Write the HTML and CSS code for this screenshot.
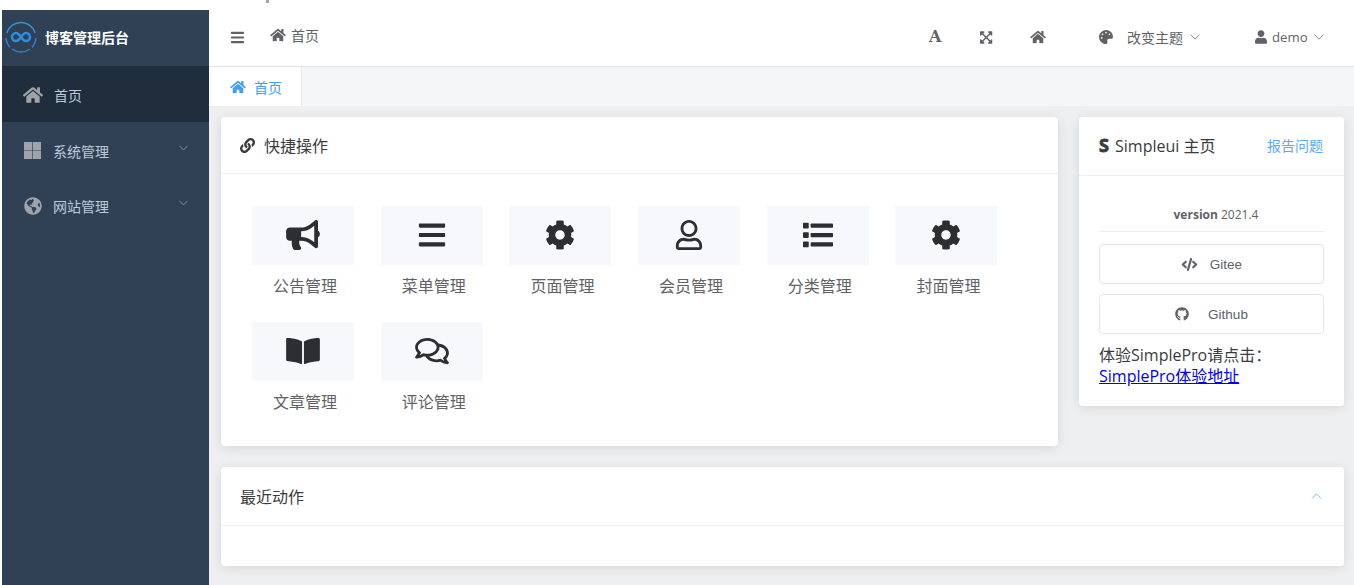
FILE: index.html
```html
<!DOCTYPE html>
<html lang="zh-CN">
<head>
<meta charset="utf-8">
<title>博客管理后台</title>
<link rel="stylesheet" href="styles.css">
</head>
<body>
<svg class="sprite" aria-hidden="true">
  <symbol id="home" viewBox="0 0 576 512"><path d="M280.37 148.26L96 300.11V464a16 16 0 0 0 16 16l112.06-.29a16 16 0 0 0 15.92-16V368a16 16 0 0 1 16-16h64a16 16 0 0 1 16 16v95.64a16 16 0 0 0 16 16.05L464 480a16 16 0 0 0 16-16V300L295.67 148.26a12.19 12.19 0 0 0-15.3 0zM571.6 251.47L488 182.56V44.05a12 12 0 0 0-12-12h-56a12 12 0 0 0-12 12v72.61L318.47 43a48 48 0 0 0-61 0L4.34 251.47a12 12 0 0 0-1.6 16.9l25.5 31A12 12 0 0 0 45.15 301l235.22-193.74a12.19 12.19 0 0 1 15.3 0L530.9 301a12 12 0 0 0 16.9-1.6l25.5-31a12 12 0 0 0-1.7-16.93z"/></symbol>
  <symbol id="bars" viewBox="0 0 448 512"><path d="M16 132h416c8.837 0 16-7.163 16-16V76c0-8.837-7.163-16-16-16H16C7.163 60 0 67.163 0 76v40c0 8.837 7.163 16 16 16zm0 160h416c8.837 0 16-7.163 16-16v-40c0-8.837-7.163-16-16-16H16c-8.837 0-16 7.163-16 16v40c0 8.837 7.163 16 16 16zm0 160h416c8.837 0 16-7.163 16-16v-40c0-8.837-7.163-16-16-16H16c-8.837 0-16 7.163-16 16v40c0 8.837 7.163 16 16 16z"/></symbol>
  <symbol id="cog" viewBox="0 0 512 512"><path d="M487.4 315.7l-42.6-24.6c4.3-23.2 4.3-47 0-70.2l42.6-24.6c4.9-2.8 7.1-8.6 5.5-14-11.1-35.6-30-67.8-54.7-94.6-3.8-4.1-10-5.1-14.8-2.3L380.8 110c-17.9-15.4-38.5-27.3-60.8-35.1V25.8c0-5.6-3.9-10.5-9.4-11.7-36.7-8.2-74.3-7.8-109.2 0-5.5 1.2-9.4 6.1-9.4 11.7V75c-22.2 7.9-42.8 19.8-60.8 35.1L88.7 85.5c-4.9-2.8-11-1.9-14.8 2.3-24.7 26.7-43.6 58.9-54.7 94.6-1.7 5.4.6 11.2 5.5 14L67.3 221c-4.3 23.2-4.3 47 0 70.2l-42.6 24.6c-4.9 2.8-7.1 8.6-5.5 14 11.1 35.6 30 67.8 54.7 94.6 3.8 4.1 10 5.1 14.8 2.3l42.6-24.6c17.9 15.4 38.5 27.3 60.8 35.1v49.2c0 5.6 3.9 10.5 9.4 11.7 36.7 8.2 74.3 7.8 109.2 0 5.5-1.2 9.4-6.1 9.4-11.7v-49.2c22.2-7.9 42.8-19.8 60.8-35.1l42.6 24.6c4.9 2.8 11 1.9 14.8-2.3 24.7-26.7 43.6-58.9 54.7-94.6 1.5-5.5-.7-11.3-5.6-14.1zM256 336c-44.1 0-80-35.9-80-80s35.9-80 80-80 80 35.9 80 80-35.9 80-80 80z"/></symbol>
  <symbol id="bullhorn" viewBox="0 0 576 512"><path d="M576 240c0-23.63-12.95-44.04-32-55.12V32.01C544 23.26 537.02 0 512 0c-7.12 0-14.19 2.38-19.98 7.02l-85.03 68.03C364.28 109.19 310.66 128 256 128H64c-35.35 0-64 28.65-64 64v96c0 35.35 28.65 64 64 64h33.7c-1.39 10.48-2.18 21.14-2.18 32 0 39.77 9.26 77.35 25.56 110.94 5.19 10.69 16.52 17.06 28.4 17.06h74.28c26.05 0 41.69-29.84 25.9-50.56-16.4-21.52-26.15-48.36-26.15-77.44 0-11.11 1.62-21.79 4.41-32H256c54.66 0 108.28 18.81 150.98 52.95l85.03 68.03a32.023 32.023 0 0 0 19.98 7.02c24.92 0 32-22.78 32-32V295.13C563.05 284.04 576 263.63 576 240zm-96 141.42l-33.05-26.44C392.95 311.78 325.12 288 256 288v-96c69.12 0 136.95-23.78 190.95-66.98L480 98.58v282.84z"/></symbol>
  <symbol id="user" viewBox="0 0 448 512"><path d="M224 256c70.7 0 128-57.3 128-128S294.7 0 224 0 96 57.3 96 128s57.3 128 128 128zm89.6 32h-16.7c-22.2 10.2-46.9 16-72.9 16s-50.6-5.8-72.9-16h-16.7C60.2 288 0 348.2 0 422.4V464c0 26.5 21.5 48 48 48h352c26.5 0 48-21.5 48-48v-41.6c0-74.2-60.2-134.4-134.4-134.4z"/></symbol>
  <symbol id="user-o" viewBox="0 0 448 512"><path d="M313.6 304c-28.7 0-42.5 16-89.6 16-47.1 0-60.8-16-89.6-16C60.2 304 0 364.2 0 438.4V464c0 26.5 21.5 48 48 48h352c26.5 0 48-21.5 48-48v-25.6c0-74.2-60.2-134.4-134.4-134.4zM400 464H48v-25.6c0-47.6 38.8-86.4 86.4-86.4 14.6 0 38.3 16 89.6 16 51.7 0 74.9-16 89.6-16 47.6 0 86.4 38.8 86.4 86.4V464zM224 288c79.5 0 144-64.5 144-144S303.5 0 224 0 80 64.5 80 144s64.5 144 144 144zm0-240c52.9 0 96 43.1 96 96s-43.1 96-96 96-96-43.1-96-96 43.1-96 96-96z"/></symbol>
  <symbol id="list" viewBox="0 0 512 512"><rect x="0" y="48" width="98" height="98" rx="14"/><rect x="0" y="208" width="98" height="98" rx="14"/><rect x="0" y="368" width="98" height="98" rx="14"/><rect x="130" y="60" width="382" height="74" rx="14"/><rect x="130" y="220" width="382" height="74" rx="14"/><rect x="130" y="380" width="382" height="74" rx="14"/></symbol>
  <symbol id="expand" viewBox="0 0 448 512"><path d="M448 344v112a23.94 23.94 0 0 1-24 24H312c-21.39 0-32.09-25.9-17-41l36.2-36.2L224 295.6 116.77 402.9 153 439c15.09 15.1 4.39 41-17 41H24a23.94 23.94 0 0 1-24-24V344c0-21.4 25.89-32.1 41-17l36.19 36.2L184.46 256 77.18 148.7 41 185c-15.1 15.1-41 4.4-41-17V56a23.94 23.94 0 0 1 24-24h112c21.39 0 32.09 25.9 17 41l-36.2 36.2L224 216.4l107.23-107.3L295 73c-15.09-15.1-4.39-41 17-41h112a23.94 23.94 0 0 1 24 24v112c0 21.4-25.89 32.1-41 17l-36.19-36.2L263.54 256l107.28 107.3L407 327.1c15.1-15.2 41-4.5 41 16.9z"/></symbol>
  <symbol id="palette" viewBox="0 0 512 512"><path d="M204.3 5C104.9 24.4 24.8 104.3 5.2 203.4c-37 187 131.7 326.4 258.8 306.7 41.2-6.4 61.4-54.6 42.5-91.7-23.1-45.4 9.9-98.4 60.9-98.4h79.7c35.8 0 64.8-29.6 64.9-65.3C511.5 97.1 368.1-26.9 204.3 5zM96 320c-17.7 0-32-14.3-32-32s14.3-32 32-32 32 14.3 32 32-14.3 32-32 32zm32-128c-17.7 0-32-14.3-32-32s14.3-32 32-32 32 14.3 32 32-14.3 32-32 32zm128-64c-17.7 0-32-14.3-32-32s14.3-32 32-32 32 14.3 32 32-14.3 32-32 32zm128 64c-17.7 0-32-14.3-32-32s14.3-32 32-32 32 14.3 32 32-14.3 32-32 32z"/></symbol>
  <symbol id="link" viewBox="0 0 512 512"><path d="M326.612 185.391c59.747 59.809 58.927 155.698.36 214.59-.11.12-.24.25-.36.37l-67.2 67.2c-59.27 59.27-155.699 59.262-214.96 0-59.27-59.26-59.27-155.7 0-214.96l37.106-37.106c9.84-9.84 26.786-3.3 27.294 10.606.648 17.722 3.826 35.527 9.69 52.721 1.986 5.822.567 12.262-3.783 16.612l-13.087 13.087c-28.026 28.026-28.905 73.66-1.155 101.96 28.024 28.579 74.086 28.749 102.325.51l67.2-67.19c28.191-28.191 28.073-73.757 0-101.83-3.701-3.694-7.429-6.564-10.341-8.569a16.037 16.037 0 0 1-6.947-12.606c-.396-10.567 3.348-21.456 11.698-29.806l21.054-21.055c5.521-5.521 14.182-6.199 20.584-1.731a152.482 152.482 0 0 1 20.522 17.197zM467.547 44.449c-59.261-59.262-155.69-59.27-214.96 0l-67.2 67.2c-.12.12-.25.25-.36.37-58.566 58.892-59.387 154.781.36 214.59a152.454 152.454 0 0 0 20.521 17.196c6.402 4.468 15.064 3.789 20.584-1.731l21.054-21.055c8.35-8.35 12.094-19.239 11.698-29.806a16.037 16.037 0 0 0-6.947-12.606c-2.912-2.005-6.64-4.875-10.341-8.569-28.073-28.073-28.191-73.639 0-101.83l67.2-67.19c28.239-28.239 74.3-28.069 102.325.51 27.75 28.3 26.872 73.934-1.155 101.96l-13.087 13.087c-4.35 4.35-5.769 10.79-3.783 16.612 5.864 17.194 9.042 34.999 9.69 52.721.509 13.906 17.454 20.446 27.294 10.606l37.106-37.106c59.271-59.259 59.271-155.699.001-214.959z"/></symbol>
  <symbol id="comments" viewBox="0 0 576 512"><path d="M532 386.2c27.5-27.1 44-61.1 44-98.2 0-80-76.5-146.1-176.2-157.9C368.3 72.5 294.3 32 208 32 93.1 32 0 103.6 0 192c0 37 16.5 71 44 98.2-15.3 30.7-37.3 54.5-37.7 54.9-6.3 6.7-8.1 16.5-4.4 25 3.6 8.5 12 14 21.2 14 53.5 0 96.7-20.2 125.2-38.8 9.2 2.1 18.7 3.7 28.4 4.9C208.1 407.6 281.8 448 368 448c20.8 0 40.8-2.4 59.8-6.8C456.3 459.7 499.4 480 553 480c9.2 0 17.5-5.5 21.2-14 3.6-8.5 1.9-18.3-4.4-25-.4-.3-22.5-24.1-37.8-54.8zm-392.8-92.3L122.1 305c-14.1 9.1-28.5 16.3-43.1 21.4 2.7-4.7 5.4-9.7 8-14.8l15.5-31.1L77.7 256C64.2 242.6 48 220.7 48 192c0-60.7 73.3-112 160-112s160 51.3 160 112-73.3 112-160 112c-16.5 0-33-1.9-49-5.6l-19.8-4.5zM498.3 352l-24.7 24.4 15.5 31.1c2.6 5.1 5.3 10.1 8 14.8-14.6-5.1-29-12.3-43.1-21.4l-17.1-11.1-19.9 4.6c-16 3.7-32.5 5.6-49 5.6-54 0-102.2-20.1-131.3-49.7C338 339.5 416 272.9 416 192c0-3.4-.4-6.7-.7-10C479.7 196.5 528 238.8 528 288c0 28.7-16.2 50.6-29.7 64z"/></symbol>
  <symbol id="book" viewBox="0 0 576 512"><path d="M542.22 32.05c-54.8 3.11-163.72 14.43-230.96 55.59-4.64 2.84-7.27 7.89-7.27 13.17v363.87c0 11.55 12.63 18.85 23.28 13.49 69.18-34.82 169.23-44.32 218.7-46.92 16.89-.89 30.02-14.43 30.02-30.66V62.75c.01-17.71-15.35-31.74-33.77-30.7zM264.73 87.64C197.5 46.48 88.58 35.17 33.78 32.05 15.36 31.01 0 45.04 0 62.75V400.6c0 16.24 13.13 29.78 30.02 30.66 49.49 2.6 149.59 12.11 218.77 46.95 10.62 5.35 23.21-1.94 23.21-13.46V100.63c0-5.29-2.62-10.14-7.27-12.99z"/></symbol>
  <symbol id="globe" viewBox="0 0 496 512"><path d="M248 8C111.03 8 0 119.03 0 256s111.03 248 248 248 248-111.03 248-248S384.97 8 248 8zm82.29 357.6c-3.9 3.88-7.99 7.95-11.31 11.28-2.99 3-5.1 6.7-6.17 10.71-1.51 5.66-2.73 11.38-4.77 16.87l-17.39 46.85c-13.76 3-28 4.69-42.65 4.69v-27.38c1.69-12.62-7.64-36.26-22.63-51.25-6-6-9.37-14.14-9.37-22.63v-32.01c0-11.64-6.27-22.34-16.46-27.97-14.37-7.95-34.81-19.06-48.81-26.11-11.48-5.78-22.1-13.14-31.65-21.75l-.8-.72a114.792 114.792 0 0 1-18.06-20.74c-9.38-13.77-24.66-36.42-34.59-51.14 20.47-45.5 57.36-82.04 103.2-101.89l24.01 12.01C203.48 89.74 216 82.01 216 70.11v-11.3c7.99-1.29 16.12-2.11 24.39-2.42l28.3 28.3c6.25 6.25 6.25 16.38 0 22.63L264 112l-10.34 10.34c-3.12 3.12-3.12 8.19 0 11.31l4.69 4.69c3.12 3.12 3.12 8.19 0 11.31l-8 8a8.008 8.008 0 0 1-5.66 2.34h-8.99c-2.08 0-4.08.81-5.58 2.27l-9.92 9.65a8.001 8.001 0 0 0-1.58 9.31l15.59 31.19c2.66 5.32-1.21 11.58-7.15 11.58h-5.64c-1.93 0-3.79-.7-5.24-1.96l-9.28-8.06a16.017 16.017 0 0 0-15.55-3.1l-31.17 10.39a11.95 11.95 0 0 0-8.17 11.34c0 4.53 2.56 8.66 6.61 10.69l11.08 5.54c9.41 4.71 19.79 7.16 30.31 7.16s22.59 27.29 32 32h66.75c8.49 0 16.62 3.37 22.63 9.37l13.69 13.69a30.503 30.503 0 0 1 8.93 21.57 46.536 46.536 0 0 1-13.72 32.98zM417 274.25c-5.79-1.45-10.84-5-14.15-9.97l-17.98-26.97a23.97 23.97 0 0 1 0-26.62l19.59-29.38c2.32-3.47 5.5-6.29 9.24-8.15l12.98-6.49C440.2 193.59 448 223.87 448 256c0 8.67-.74 17.16-1.82 25.54L417 274.25z"/></symbol>
  <symbol id="github" viewBox="0 0 496 512"><path d="M244.8 8C106.1 8 0 113.3 0 252c0 110.9 69.8 205.8 169.5 239.2 12.8 2.3 17.3-5.6 17.3-12.1 0-6.2-.3-40.4-.3-61.4 0 0-70 15-84.7-29.8 0 0-11.4-29.1-27.8-36.6 0 0-22.9-15.7 1.6-15.4 0 0 24.9 2 38.6 25.8 21.9 38.6 58.6 27.5 72.9 20.9 2.3-16 8.8-27.1 16-33.7-55.9-6.2-112.3-14.3-112.3-110.5 0-27.5 7.6-41.3 23.6-58.9-2.6-6.5-11.1-33.3 2.6-67.9 20.9-6.5 69 27 69 27 20-5.6 41.5-8.5 62.8-8.5s42.8 2.9 62.8 8.5c0 0 48.1-33.6 69-27 13.7 34.7 5.2 61.4 2.6 67.9 16 17.7 25.8 31.5 25.8 58.9 0 96.5-58.9 104.2-114.8 110.5 9.2 7.9 17 22.9 17 46.4 0 33.7-.3 75.4-.3 83.6 0 6.5 4.6 14.4 17.3 12.1C428.2 457.8 496 362.9 496 252 496 113.3 383.5 8 244.8 8z"/></symbol>
  <symbol id="code" viewBox="0 0 18 14"><path d="M5 4 1.800 7 5 10M13 4 16.200 7 13 10M10.600 1.200 7.400 12.800" fill="none" stroke="currentColor" stroke-width="2.300" stroke-linecap="round" stroke-linejoin="round"/></symbol>
  <symbol id="windows" viewBox="0 0 16 16"><path d="M0 0h7.700v7.700H0zM8.300 0H16v7.700H8.300zM0 8.300h7.700V16H0zM8.300 8.300H16V16H8.300z"/></symbol>
  <symbol id="down" viewBox="0 0 10 6"><path d="M.6.6 5 5.200 9.400.6" fill="none" stroke="currentColor"/></symbol>
  <symbol id="up" viewBox="0 0 10 6"><path d="M.6 5.400 5 .8 9.400 5.400" fill="none" stroke="currentColor"/></symbol>
</svg>

<div class="caret-mark"></div>
<div class="app">
  <aside class="sidebar">
    <div class="brand">
      <svg class="logo" viewBox="0 0 32 32">
        <path d="M1.700 12A15 15 0 0 1 30.300 12" stroke="#3093d8" stroke-width="1.400"/>
        <path d="M1 17A15 15 0 0 0 5 26.200M31 17A15 15 0 0 1 27 26.200M7 28A15 15 0 0 0 25 28" stroke="#2d7fd8" stroke-width="1.500"/>
        <path d="M16 16C13.800 12.800 12.500 12 11 12a4 4 0 0 0 0 8c1.500 0 2.800-.8 5-4s3.500-4 5-4a4 4 0 0 1 0 8c-1.500 0-2.800-.8-5-4z" stroke="#2d8ee0" stroke-width="2.500"/>
      </svg>
      <span>博客管理后台</span>
    </div>
    <nav>
      <a class="item active"><svg class="nav-icon home"><use href="#home"/></svg><span>首页</span></a>
      <a class="item"><svg class="nav-icon"><use href="#windows"/></svg><span>系统管理</span><svg class="chev"><use href="#down"/></svg></a>
      <a class="item"><svg class="nav-icon globe"><use href="#globe"/></svg><span>网站管理</span><svg class="chev"><use href="#down"/></svg></a>
    </nav>
  </aside>

  <div class="page">
    <header class="topbar">
      <svg class="i-bars"><use href="#bars"/></svg>
      <svg class="i-home crumb"><use href="#home"/></svg>
      <span class="crumb-text">首页</span>
      <div class="tools">
        <b class="font-a">A</b>
        <svg class="i-expand"><use href="#expand"/></svg>
        <svg class="i-home"><use href="#home"/></svg>
        <div class="theme"><svg class="i-palette"><use href="#palette"/></svg><span>改变主题</span><svg class="chev"><use href="#down"/></svg></div>
        <div class="account"><svg class="i-user"><use href="#user"/></svg><span class="name">demo</span><svg class="chev"><use href="#down"/></svg></div>
      </div>
    </header>
    <div class="tabs"><div class="tab"><svg class="i-home"><use href="#home"/></svg><span>首页</span></div></div>

    <main class="content">
      <section class="row">
        <div class="card quick">
          <div class="card-head"><svg class="i-link"><use href="#link"/></svg><span>快捷操作</span></div>
          <div class="grid">
            <a class="tile"><span class="box"><svg class="wide"><use href="#bullhorn"/></svg></span><span>公告管理</span></a>
            <a class="tile"><span class="box"><svg><use href="#bars"/></svg></span><span>菜单管理</span></a>
            <a class="tile"><span class="box"><svg><use href="#cog"/></svg></span><span>页面管理</span></a>
            <a class="tile"><span class="box"><svg><use href="#user-o"/></svg></span><span>会员管理</span></a>
            <a class="tile"><span class="box"><svg><use href="#list"/></svg></span><span>分类管理</span></a>
            <a class="tile"><span class="box"><svg><use href="#cog"/></svg></span><span>封面管理</span></a>
            <a class="tile"><span class="box"><svg class="wide"><use href="#book"/></svg></span><span>文章管理</span></a>
            <a class="tile"><span class="box"><svg class="wide"><use href="#comments"/></svg></span><span>评论管理</span></a>
          </div>
        </div>
        <div class="card about">
          <div class="card-head"><b class="s-mark">S</b><span>Simpleui 主页</span><a class="report">报告问题</a></div>
          <div class="about-body">
            <div class="version"><b>version</b> 2021.4</div>
            <button class="btn"><svg class="i-code"><use href="#code"/></svg><span>Gitee</span></button>
            <button class="btn gh"><svg class="i-github"><use href="#github"/></svg><span>Github</span></button>
            <div class="promo">体验SimplePro请点击：<br><a href="#">SimplePro体验地址</a></div>
          </div>
        </div>
      </section>
      <section class="card recent">
        <div class="card-head"><span>最近动作</span><svg class="chev"><use href="#up"/></svg></div>
      </section>
    </main>
  </div>
</div>
</body>
</html>
```

FILE: styles.css
```css
* { box-sizing: border-box; }
body {
  margin: 0;
  padding: 10px 0 0 2px;
  height: 585px;
  overflow: hidden;
  background: #fff;
  color: #3a3b3e;
  font-family: "Open Sans", "Noto Sans", "Noto Sans CJK SC", sans-serif;
  font-size: 14px;
}
svg { display: block; fill: currentColor; flex: none; }
.sprite { position: absolute; width: 0; height: 0; }
.caret-mark { position: absolute; left: 266px; top: 0; width: 3px; height: 3px; background: #a9a0b8; }
.app { display: flex; height: 575px; }

.sidebar { width: 207px; flex: none; background: #304156; color: #bfcbd9; }
.brand { display: flex; align-items: center; height: 56px; padding: 0 0 3px 3px; gap: 8px; color: #fff; font-weight: 700; }
.logo { width: 32px; height: 32px; fill: none; }
.item { display: flex; align-items: center; height: 55.500px; padding: 3px 21px 0 22px; color: #bfcbd9; }
.item span { width: 125px; margin-left: 12px; }
.item.active { background: #1f2d3d; }
.item.active span { margin-left: 11px; }
.nav-icon { width: 17px; height: 17px; color: #a0a4aa; }
.nav-icon.home { width: 20px; height: 18px; margin-left: -1px; }
.nav-icon.globe { width: 18px; height: 18px; margin-right: -1px; }
.chev { width: 10px; height: 6px; color: #8a93a0; }
.item .chev { width: 9px; margin: -6px 0 0 2px; }

.page { flex: 1; min-width: 0; background: #eeeff1; }
.topbar { display: flex; align-items: center; height: 57px; padding: 0 30px 2px 22px; background: #fff; color: #606266; border-bottom: 1px solid #e0e2e5; }
.i-bars { width: 13px; height: 15px; }
.i-home { width: 16px; height: 14px; }
.crumb { margin: -4px 5px 0 26px; }
.crumb-text { margin-top: -5px; }
.tools { display: flex; align-items: center; margin-left: auto; }
.font-a { width: 13px; font: 700 16px/20px "DejaVu Serif", serif; }
.i-expand { width: 12.500px; height: 15px; margin: 0 37.500px 0 38px; }
.theme, .account { display: flex; align-items: center; }
.theme { margin-left: 53px; }
.theme span { margin-top: -1px; }
.i-palette { width: 14px; height: 14px; margin-right: 14px; }
.tools .chev { margin-left: 7px; }
.account { margin-left: 55px; }
.name { width: 35px; font-size: 13.200px; }
.i-user { width: 12px; height: 14px; margin-right: 5px; }
.tabs { height: 39px; background: #f5f6f8; }
.tab { display: flex; align-items: center; width: 93px; height: 39px; padding: 0 0 0 21px; gap: 8px; background: #fff; border-right: 1px solid #e8eaee; color: #409eff; }

.content { padding: 11px 10px 0 12px; }
.row { display: flex; align-items: flex-start; gap: 21px; }
.card { background: #fff; border-radius: 4px; box-shadow: 0 2px 12px rgba(0, 0, 0, .1); }
.card-head { display: flex; align-items: center; height: 57px; padding: 0 20px 1px 19px; border-bottom: 1px solid #ebeef5; font-size: 16px; }
.quick { width: 837px; height: 329px; }
.i-link { width: 15px; height: 15px; margin: 2px 9px 0 0; }
.grid { display: grid; grid-template-columns: repeat(6, 102px); column-gap: 26.700px; grid-auto-rows: 116px; padding: 32px 0 0 31px; }
.tile { display: flex; flex-direction: column; color: #606266; font-size: 16px; line-height: 22px; }
.tile > span:last-child { margin: 10px 0 0 21px; }
.box { display: flex; align-items: center; justify-content: center; height: 59px; padding-bottom: 2px; background: #f7f8fb; color: #2c2e31; }
.box svg { width: 30px; height: 30px; }
.box .wide { width: 34px; }

.about { width: 265px; height: 289px; }
.about .card-head { height: 59px; padding: 0 21px 2px 20px; }
.s-mark { width: 12px; margin-right: 4px; font: 700 18px "Noto Sans", sans-serif; -webkit-text-stroke: .8px currentColor; }
.report { margin-left: auto; color: #5aa9fb; font-size: 14px; }
.about-body { padding: 28px 20px 0; }
.version { height: 28px; margin-bottom: 12px; border-bottom: 1px solid #ebeef5; color: #606266; font-size: 12px; line-height: 21px; text-align: center; padding-left: 9px; }
.btn { display: flex; align-items: center; justify-content: center; width: 100%; height: 40px; margin-bottom: 10px; padding: 0; border: 1px solid #e2e5ec; border-radius: 4px; background: #fff; color: #606266; font: 13.500px "Liberation Sans", sans-serif; }
.i-code { width: 17px; height: 13px; margin-right: 12px; }
.i-github { width: 14px; height: 14px; margin-right: 19px; }
.promo { padding-top: 1px; font-size: 16px; line-height: 21px; }
.promo a { color: #00e; }

.recent { height: 99px; margin-top: 21px; }
.recent .card-head { height: 59px; }
.recent .chev { width: 11px; margin: 0 2px 0 auto; color: #6fb5f5; }
```
